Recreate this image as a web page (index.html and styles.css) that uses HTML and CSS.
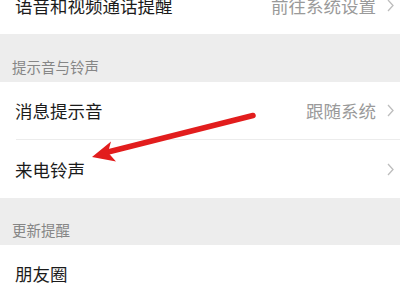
FILE: index.html
```html
<!DOCTYPE html>
<html lang="zh-CN">
<head>
<meta charset="utf-8">
<link rel="stylesheet" href="styles.css">
</head>
<body>
<div class="page">
  <div class="group first">
    <div class="row">
      <span class="label">语音和视频通话提醒</span>
      <span class="value">前往系统设置</span>
      <svg class="chev" viewBox="0 0 7 13" width="7" height="13"><path d="M1 1 L6 6.5 L1 12" fill="none" stroke="#bdbdbd" stroke-width="1.3"/></svg>
    </div>
  </div>
  <div class="section">提示音与铃声</div>
  <div class="group">
    <div class="row">
      <span class="label">消息提示音</span>
      <span class="value">跟随系统</span>
      <svg class="chev" viewBox="0 0 7 13" width="7" height="13"><path d="M1 1 L6 6.5 L1 12" fill="none" stroke="#bdbdbd" stroke-width="1.3"/></svg>
    </div>
    <div class="divider"></div>
    <div class="row tall">
      <span class="label">来电铃声</span>
      <svg class="chev" viewBox="0 0 7 13" width="7" height="13"><path d="M1 1 L6 6.5 L1 12" fill="none" stroke="#bdbdbd" stroke-width="1.3"/></svg>
    </div>
  </div>
  <div class="section second">更新提醒</div>
  <div class="group">
    <div class="row">
      <span class="label">朋友圈</span>
    </div>
  </div>
  <svg class="arrow" viewBox="0 0 400 300" width="400" height="300">
    <path d="M253 115.5 L108 152" stroke="#e21d1d" stroke-width="5.5" stroke-linecap="round" fill="none"/>
    <polygon points="92,157 111,141.5 108,152.5 116,161.5" fill="#e21d1d"/>
  </svg>
</div>
</body>
</html>
```

FILE: styles.css
```css
html, body {
  margin: 0;
  padding: 0;
}
body {
  background: #ededed;
  font-family: "Noto Sans CJK SC", "Noto Sans", sans-serif;
  width: 400px;
  height: 300px;
  overflow: hidden;
}
.page {
  position: relative;
  width: 400px;
  height: 300px;
  overflow: hidden;
}
.group {
  background: #ffffff;
}
.group.first {
  margin-top: -23px;
}
.row {
  height: 57px;
  display: flex;
  align-items: center;
  padding: 0 4px 0 15px;
}
.row.tall {
  height: 58px;
}
.label {
  font-size: 17.5px;
  color: #1b1b1b;
  flex: 1;
}
.value {
  font-size: 17.5px;
  color: #9a9a9a;
  margin-right: 11px;
}
.chev {
  display: block;
  margin-right: 2px;
}
.divider {
  height: 1px;
  margin-left: 16px;
  background: #ececec;
}
.section {
  height: 48px;
  box-sizing: border-box;
  display: flex;
  align-items: flex-end;
  padding: 0 12px 5px;
  font-size: 14.5px;
  color: #868686;
}
.section.second {
  height: 47px;
}
.arrow {
  position: absolute;
  left: 0;
  top: 0;
  pointer-events: none;
}
```
